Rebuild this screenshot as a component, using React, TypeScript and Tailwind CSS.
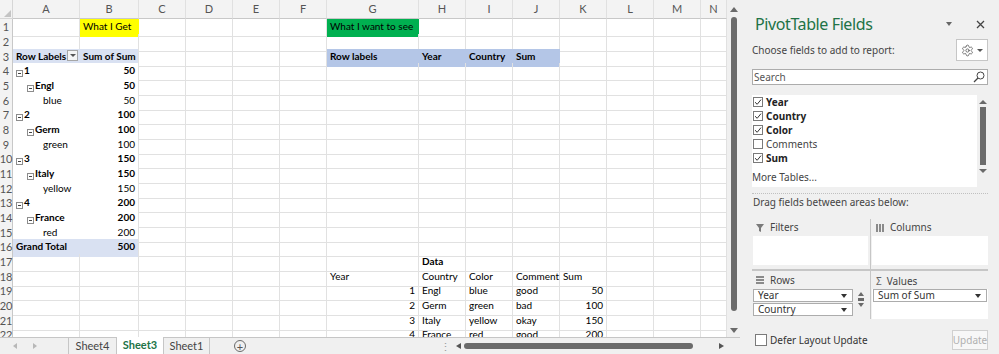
import React from 'react';
import { twMerge } from 'tailwind-merge';
import { Settings } from 'lucide-react';

type Cell = { t?: string; c?: string; lvl?: number; dd?: boolean };

const COLS =
  'grid grid-cols-[13px_67px_59px_47px_47px_47px_47px_92px_47px_47px_47px_47px_47px_47px_26px]';
const letters = ['A', 'B', 'C', 'D', 'E', 'F', 'G', 'H', 'I', 'J', 'K', 'L', 'M', 'N'];
const heights = ['h-[15px]', 'h-[15px]', 'h-[14px]'];

// pivot body styles
const pvA = 'bg-white border-r-white border-b-white';
const pvB = 'bg-white border-b-white text-right';
const pvLine = 'border-b-[#95b3d7]';
const hdrBlue = 'bg-[#b4c6e7] border-r-[#b4c6e7] border-b-[#b4c6e7] font-bold';

const pivot: [string, string, number][] = [
  ['1', '50', 1], ['Engl', '50', 2], ['blue', '50', 3],
  ['2', '100', 1], ['Germ', '100', 2], ['green', '100', 3],
  ['3', '150', 1], ['Italy', '150', 2], ['yellow', '150', 3],
  ['4', '200', 1], ['France', '200', 2], ['red', '200', 3],
];

const data: Record<number, Record<number, Cell>> = {
  1: {
    2: { t: 'What I Get', c: 'bg-[#ffff00] border-r-[#ffff00] border-b-[#ffff00]' },
    7: { t: 'What I want to see', c: 'bg-[#00b050] border-r-[#00b050] border-b-[#00b050]' },
  },
  3: {
    1: { t: 'Row Labels', dd: true, c: 'bg-[#d9e1f2] border-r-[#d9e1f2] border-b-[#95b3d7] font-bold' },
    2: { t: 'Sum of Sum', c: 'bg-[#d9e1f2] border-b-[#95b3d7] font-bold text-right' },
    7: { t: 'Row labels', c: hdrBlue },
    8: { t: 'Year', c: hdrBlue },
    9: { t: 'Country', c: hdrBlue },
    10: { t: 'Sum', c: hdrBlue },
  },
  16: {
    1: { t: 'Grand Total', c: 'bg-[#d9e1f2] border-r-[#d9e1f2] border-b-[#d9e1f2] font-bold' },
    2: { t: '500', c: 'bg-[#d9e1f2] border-b-[#d9e1f2] font-bold text-right' },
  },
  17: { 8: { t: 'Data', c: 'font-bold' } },
  18: { 7: { t: 'Year' }, 8: { t: 'Country' }, 9: { t: 'Color' }, 10: { t: 'Comment', c: 'overflow-visible' }, 11: { t: 'Sum' } },
  19: { 7: { t: '1', c: 'text-right' }, 8: { t: 'Engl' }, 9: { t: 'blue' }, 10: { t: 'good' }, 11: { t: '50', c: 'text-right' } },
  20: { 7: { t: '2', c: 'text-right' }, 8: { t: 'Germ' }, 9: { t: 'green' }, 10: { t: 'bad' }, 11: { t: '100', c: 'text-right' } },
  21: { 7: { t: '3', c: 'text-right' }, 8: { t: 'Italy' }, 9: { t: 'yellow' }, 10: { t: 'okay' }, 11: { t: '150', c: 'text-right' } },
  22: { 7: { t: '4', c: 'text-right' }, 8: { t: 'France' }, 9: { t: 'red' }, 10: { t: 'good' }, 11: { t: '200', c: 'text-right' } },
};

pivot.forEach(([label, val, lvl], i) => {
  const r = 4 + i;
  const line = lvl === 1 || r === 15 ? pvLine : '';
  data[r] = {
    1: { t: label, lvl, c: twMerge(pvA, line, lvl < 3 && 'font-bold') },
    2: { t: val, c: twMerge(pvB, line, lvl < 3 && 'font-bold') },
  };
});

function Minus() {
  return (
    <span className="inline-flex w-[7px] h-[7px] border border-[#8c8c8c] items-center justify-center mr-[1px] bg-white">
      <span className="w-[3px] h-px bg-[#444]" />
    </span>
  );
}

function GridCell({ cell }: { cell?: Cell }) {
  const pad = cell?.lvl === 1 ? 'pl-[3px]' : cell?.lvl === 2 ? 'pl-[14px]' : cell?.lvl === 3 ? 'pl-[30px]' : 'px-[3px]';
  return (
    <div
      className={twMerge(
        'relative border-r border-b border-r-[#e1e1e1] border-b-[#e1e1e1] overflow-hidden whitespace-nowrap text-[10px] leading-[15px] text-black',
        pad,
        cell?.c
      )}
    >
      {cell?.lvl && cell.lvl < 3 ? <Minus /> : null}
      {cell?.t}
      {cell?.dd ? (
        <span className="absolute right-[1px] top-[1px] w-[11px] h-[11px] border border-[#a6a6a6] bg-[#f4f4f4] flex items-center justify-center">
          <span className="w-0 h-0 border-l-[3px] border-r-[3px] border-t-[3px] border-l-transparent border-r-transparent border-t-[#555]" />
        </span>
      ) : null}
    </div>
  );
}

function Sheet() {
  return (
    <div className="w-[727px] h-[337px] overflow-hidden bg-white">
      <div className={twMerge(COLS, 'h-[19px] bg-[#f3f3f3]')}>
        <div className="relative border-r border-b border-[#d6d6d6]">
          <svg width="7" height="7" viewBox="0 0 7 7" className="absolute right-[1px] bottom-[1px]">
            <path d="M7 0 V7 H0 Z" fill="#c4c4c4" />
          </svg>
        </div>
        {letters.map((l) => (
          <div key={l} className="border-r border-b border-r-[#e0e0e0] border-b-[#c8c8c8] text-[11px] text-[#555] flex items-center justify-center overflow-hidden">
            {l}
          </div>
        ))}
      </div>
      {Array.from({ length: 22 }, (_, i) => i + 1).map((r) => (
        <div key={r} className={twMerge(COLS, heights[(r - 1) % 3])}>
          <div className="bg-[#f3f3f3] border-r border-b border-r-[#c8c8c8] border-b-[#e0e0e0] text-[11px] text-[#555] flex items-center justify-center">
            {r}
          </div>
          {letters.map((_, ci) => (
            <GridCell key={ci} cell={data[r]?.[ci + 1]} />
          ))}
        </div>
      ))}
    </div>
  );
}

function VScroll() {
  return (
    <div className="w-[13px] h-[337px] bg-[#f0f0f0] flex flex-col items-center">
      <span className="mt-[7px] w-0 h-0 border-l-[4px] border-r-[4px] border-b-[5px] border-l-transparent border-r-transparent border-b-[#6a6a6a]" />
      <div className="mt-[5px] w-[6px] h-[294px] rounded-full bg-[#6b6b6b]" />
      <span className="mt-[17px] w-0 h-0 border-l-[4px] border-r-[4px] border-t-[5px] border-l-transparent border-r-transparent border-t-[#6a6a6a]" />
    </div>
  );
}

function TabBar() {
  return (
    <div className="h-[17px] w-[740px] bg-[#f0f0f0] border-t border-[#c6c6c6] flex items-stretch text-[11px] text-[#444]">
      <div className="w-[68px] flex items-center gap-[16px] pl-[13px]">
        <span className="w-0 h-0 border-t-[3px] border-b-[3px] border-r-[4px] border-t-transparent border-b-transparent border-r-[#b8b8b8]" />
        <span className="w-0 h-0 border-t-[3px] border-b-[3px] border-l-[4px] border-t-transparent border-b-transparent border-l-[#b8b8b8]" />
      </div>
      <div className="w-[48px] border-l border-[#c6c6c6] flex items-center justify-center">Sheet4</div>
      <div className="w-[47px] -mt-px bg-white border-l border-[#c6c6c6] flex items-center justify-center font-bold text-[#217346]">Sheet3</div>
      <div className="w-[47px] border-l border-r border-[#c6c6c6] flex items-center justify-center">Sheet1</div>
      <div className="w-[230px] flex items-center pl-[24px]">
        <span className="w-[12px] h-[12px] rounded-full border border-[#6a6a6a] flex items-center justify-center text-[11px] leading-none text-[#555]">+</span>
      </div>
      <div className="flex items-center text-[#9a9a9a] leading-none w-[10px]">⋮</div>
      <div className="flex-1 flex items-center pl-[6px] pr-[16px]">
        <span className="w-0 h-0 border-t-[3px] border-b-[3px] border-r-[5px] border-t-transparent border-b-transparent border-r-[#555]" />
        <div className="ml-[3px] w-[229px] h-[6px] rounded-full bg-[#6b6b6b]" />
        <div className="flex-1" />
        <span className="w-0 h-0 border-t-[3px] border-b-[3px] border-l-[5px] border-t-transparent border-b-transparent border-l-[#555]" />
      </div>
    </div>
  );
}

function Check({ on }: { on: boolean }) {
  return (
    <span className="w-[10px] h-[10px] border border-[#7a7a7a] bg-white flex items-center justify-center shrink-0">
      {on ? (
        <svg width="8" height="8" viewBox="0 0 8 8">
          <path d="M1 4.2 L3.2 6.3 L7 1.6" fill="none" stroke="#333" strokeWidth="1" />
        </svg>
      ) : null}
    </span>
  );
}

function Drop({ label }: { label: string }) {
  return (
    <div className="h-[13px] bg-white border border-[#acacac] flex items-center justify-between pl-[4px] pr-[5px] text-[10px] text-[#333]">
      <span>{label}</span>
      <span className="w-0 h-0 border-l-[3px] border-r-[3px] border-t-[4px] border-l-transparent border-r-transparent border-t-[#333]" />
    </div>
  );
}

function Panel() {
  const fields: [string, boolean][] = [
    ['Year', true], ['Country', true], ['Color', true], ['Comments', false], ['Sum', true],
  ];
  return (
    <div className="w-[259px] h-[354px] bg-[#f0f0f0] pl-[12px] pr-[11px] flex flex-col text-[#444] font-['Noto_Sans',sans-serif]">
      <div className="pt-[12px] h-[36px] flex items-center">
        <span className="flex-1 pl-[3px] text-[16px] leading-[22px] tracking-[-0.4px] text-[#217346]">PivotTable Fields</span>
        <span className="w-0 h-0 border-l-[3px] border-r-[3px] border-t-[4px] border-l-transparent border-r-transparent border-t-[#666] mr-[24px]" />
        <svg width="9" height="9" viewBox="0 0 9 9" className="mr-[3px]">
          <path d="M1 1 L8 8 M8 1 L1 8" stroke="#444" strokeWidth="1.3" />
        </svg>
      </div>
      <div className="mt-[3px] h-[22px] flex items-center">
        <span className="flex-1 text-[10px]">Choose fields to add to report:</span>
        <div className="w-[32px] h-[22px] bg-white border border-[#c6c6c6] flex items-center justify-center gap-[3px]">
          <Settings size={13} strokeWidth={1.3} color="#444" />
          <span className="w-0 h-0 border-l-[3px] border-r-[3px] border-t-[3px] border-l-transparent border-r-transparent border-t-[#555]" />
        </div>
      </div>
      <div className="mt-[8px] h-[16px] bg-white border border-[#acacac] flex items-center pl-[1px] pr-[2px] text-[10px] text-[#555]">
        <span className="flex-1">Search</span>
        <svg width="12" height="12" viewBox="0 0 12 12">
          <circle cx="7.5" cy="4.5" r="3.5" fill="none" stroke="#444" strokeWidth="1" />
          <path d="M5 7 L1 11" stroke="#444" strokeWidth="1.2" />
        </svg>
      </div>
      <div className="mt-[10px] h-[92px] flex">
        <div className="flex-1 bg-white flex flex-col text-[10px] text-[#222]">
          {fields.map(([f, on]) => (
            <div key={f} className="h-[14px] flex items-center gap-[3px] pl-[1px]">
              <Check on={on} />
              <span className={on ? 'font-bold' : 'text-[#444]'}>{f}</span>
            </div>
          ))}
          <div className="mt-[5px] h-[14px] flex items-center text-[#444]">More Tables...</div>
        </div>
        <div className="w-[11px] flex flex-col items-center">
          <span className="mt-[5px] w-0 h-0 border-l-[4px] border-r-[4px] border-b-[4px] border-l-transparent border-r-transparent border-b-[#6a6a6a]" />
          <div className="mt-[3px] w-[6px] h-[58px] bg-[#6b6b6b]" />
          <span className="mt-[4px] w-0 h-0 border-l-[4px] border-r-[4px] border-t-[4px] border-l-transparent border-r-transparent border-t-[#6a6a6a]" />
        </div>
      </div>
      <div className="mt-[6px] border-t border-dotted border-[#c0c0c0]" />
      <div className="mt-[1px] h-[14px] leading-[14px] text-[10px] pl-[1px]">Drag fields between areas below:</div>
      <div className="mt-[10px] flex flex-col">
        <div className="flex">
          <div className="w-[116px] pl-[1px]">
            <div className="h-[17px] flex items-center gap-[6px] pl-[3px] text-[10px]">
              <svg width="8" height="8" viewBox="0 0 8 8"><path d="M0 0 H8 L5 4 V8 L3 7 V4 Z" fill="#7a7a7a" /></svg>
              Filters
            </div>
            <div className="h-[29px] bg-white" />
          </div>
          <div className="w-[4px] flex justify-center"><div className="w-px bg-[#c6c6c6]" /></div>
          <div className="w-[116px]">
            <div className="h-[17px] flex items-center gap-[6px] pl-[4px] text-[10px]">
              <svg width="8" height="8" viewBox="0 0 8 8"><path d="M0 0 H2 V8 H0 Z M3 0 H5 V8 H3 Z M6 0 H8 V8 H6 Z" fill="#8a8a8a" /></svg>
              Columns
            </div>
            <div className="h-[29px] bg-white" />
          </div>
        </div>
        <div className="flex h-[4px]">
          <div className="w-[116px]" />
          <div className="w-[4px] flex justify-center"><div className="w-px bg-[#c6c6c6]" /></div>
        </div>
        <div className="h-[2px] bg-[#c6c6c6]" />
        <div className="flex">
          <div className="w-[116px] pl-[1px]">
            <div className="h-[18px] flex items-center gap-[6px] pl-[3px] text-[10px]">
              <svg width="8" height="8" viewBox="0 0 8 8"><path d="M0 0 H8 V2 H0 Z M0 3 H8 V5 H0 Z M0 6 H8 V8 H0 Z" fill="#8a8a8a" /></svg>
              Rows
            </div>
            <div className="h-[30px] flex">
              <div className="w-[100px] flex flex-col gap-[1px]">
                <Drop label="Year" />
                <Drop label="Country" />
              </div>
              <div className="flex-1 flex flex-col items-center pt-[3px] gap-[2px]">
                <span className="w-0 h-0 border-l-[3px] border-r-[3px] border-b-[4px] border-l-transparent border-r-transparent border-b-[#6a6a6a]" />
                <span className="w-[6px] h-[3px] bg-[#6a6a6a]" />
                <span className="w-0 h-0 border-l-[3px] border-r-[3px] border-t-[4px] border-l-transparent border-r-transparent border-t-[#6a6a6a]" />
              </div>
            </div>
          </div>
          <div className="w-[4px] flex justify-center"><div className="w-px bg-[#c6c6c6]" /></div>
          <div className="w-[116px]">
            <div className="h-[16px] flex items-center gap-[5px] pl-[4px] text-[10px] mt-[2px]">
              <span className="text-[10px] text-[#666] leading-none">Σ</span>
              Values
            </div>
            <div className="h-[30px] bg-white px-[1px]">
              <Drop label="Sum of Sum" />
            </div>
          </div>
        </div>
      </div>
      <div className="mt-[11px] h-[20px] flex items-center">
        <div className="pl-[3px]">
          <span className="block w-[12px] h-[12px] border border-[#7a7a7a] bg-white" />
        </div>
        <span className="flex-1 pl-[3px] text-[10px] text-[#333]">Defer Layout Update</span>
        <div className="w-[36px] h-[20px] border border-[#d0d0d0] bg-[#f7f7f7] text-[10px] text-[#b0b0b0] flex items-center justify-center">
          Update
        </div>
      </div>
    </div>
  );
}

export default function App() {
  return (
    <div className="w-[999px] h-[354px] flex overflow-hidden bg-[#f0f0f0] font-['Lato',sans-serif]">
      <div className="w-[740px] flex flex-col">
        <div className="flex">
          <Sheet />
          <VScroll />
        </div>
        <TabBar />
      </div>
      <Panel />
    </div>
  );
}
